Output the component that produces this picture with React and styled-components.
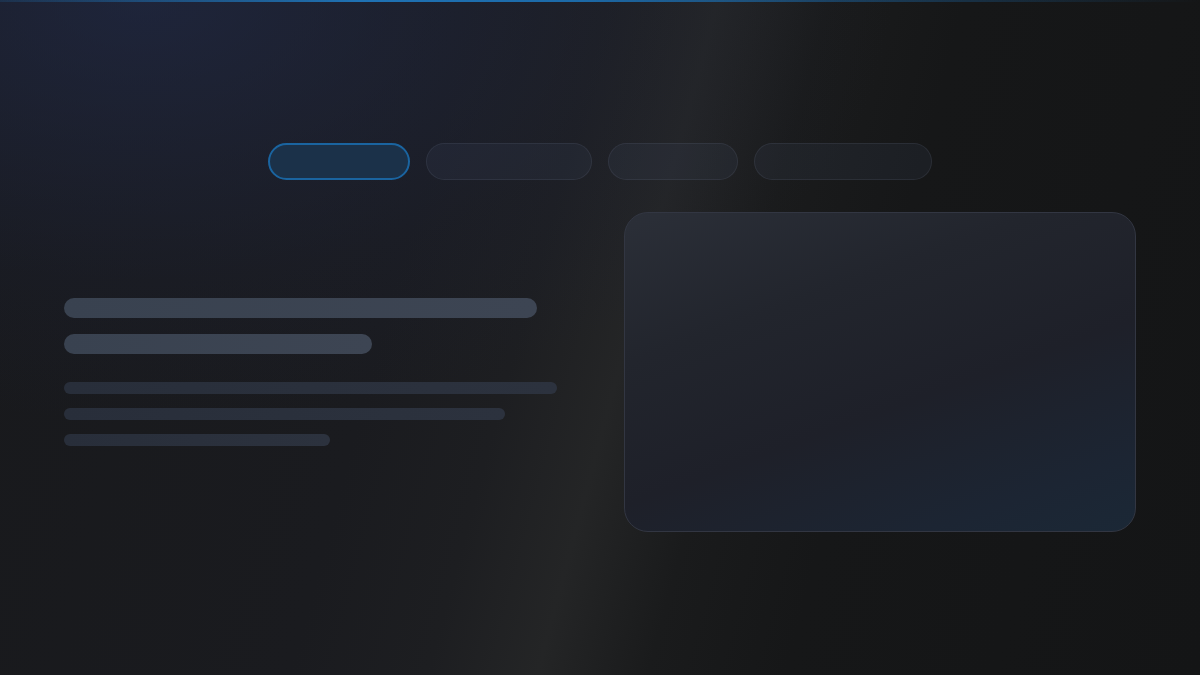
import styled, { createGlobalStyle } from "styled-components";

const GlobalStyle = createGlobalStyle`
  * { box-sizing: border-box; }
  html, body { margin: 0; padding: 0; height: 100%; }
  body {
    font-family: Inter, "Noto Sans", sans-serif;
    background: #141516;
  }
  #root { min-height: 100%; }
`;

const Page = styled.div`
  position: relative;
  width: 100%;
  min-height: 100vh;
  overflow: hidden;
  background:
    radial-gradient(ellipse 1000px 560px at 12% 0%, rgba(34, 44, 78, 0.6), rgba(30, 36, 60, 0.2) 50%, transparent 75%),
    linear-gradient(
      105deg,
      #18191c 0%,
      #1a1b1f 34%,
      #1d1e21 44%,
      #242526 52%,
      #1a1b1c 60%,
      #161718 70%,
      #141516 100%
    );
  padding: 0 64px;
`;

const TopGlow = styled.div`
  height: 2px;
  margin: 0 -64px;
  background: linear-gradient(
    90deg,
    rgba(30, 110, 175, 0.2) 0%,
    #1f72b4 30%,
    #1c6aa8 48%,
    rgba(28, 100, 160, 0.5) 70%,
    rgba(28, 100, 160, 0) 100%
  );
`;

const Tabs = styled.nav`
  display: flex;
  justify-content: center;
  gap: 16px;
  margin-top: 141px;
`;

const Tab = styled.div`
  width: ${(p) => p.$w}px;
  height: 37px;
  border-radius: 19px;
  background: ${(p) => (p.$active ? "#1b3149" : "rgba(70, 85, 115, 0.14)")};
  border: ${(p) =>
    p.$active ? "2px solid #1a64a0" : "1px solid rgba(110, 120, 145, 0.16)"};
`;

const Hero = styled.section`
  display: grid;
  grid-template-columns: 1fr 1fr;
  gap: 48px;
  align-items: center;
  margin-top: 32px;
  margin-left: -1px;
`;

const TextBlock = styled.div`
  display: flex;
  flex-direction: column;
  padding-left: 1px;
`;

const Heading = styled.div`
  width: ${(p) => p.$w}%;
  height: 20px;
  border-radius: 10px;
  background: linear-gradient(90deg, #394250, #3d4553);
  margin-bottom: 16px;
`;

const Line = styled.div`
  width: ${(p) => p.$w}%;
  height: 12px;
  border-radius: 6px;
  background: linear-gradient(90deg, #282e3a, #2c323e);
  margin-top: ${(p) => (p.$first ? "12px" : "14px")};
`;

const Card = styled.div`
  aspect-ratio: 16 / 10;
  border-radius: 24px;
  border: 1px solid #323642;
  background: linear-gradient(160deg, #2b2f38 0%, #22252d 30%, #1e2029 58%, #1c2533 85%, #1b2836 100%);
`;

export default function App() {
  const tabs = [142, 166, 130, 178];
  return (
    <>
      <GlobalStyle />
      <Page>
        <TopGlow />
        <Tabs>
          {tabs.map((w, i) => (
            <Tab key={i} $w={w} $active={i === 0} />
          ))}
        </Tabs>
        <Hero>
          <TextBlock>
            <Heading $w={92.4} />
            <Heading $w={60.2} />
            <Line $w={96.3} $first />
            <Line $w={86.3} />
            <Line $w={52.1} />
          </TextBlock>
          <Card />
        </Hero>
      </Page>
    </>
  );
}
